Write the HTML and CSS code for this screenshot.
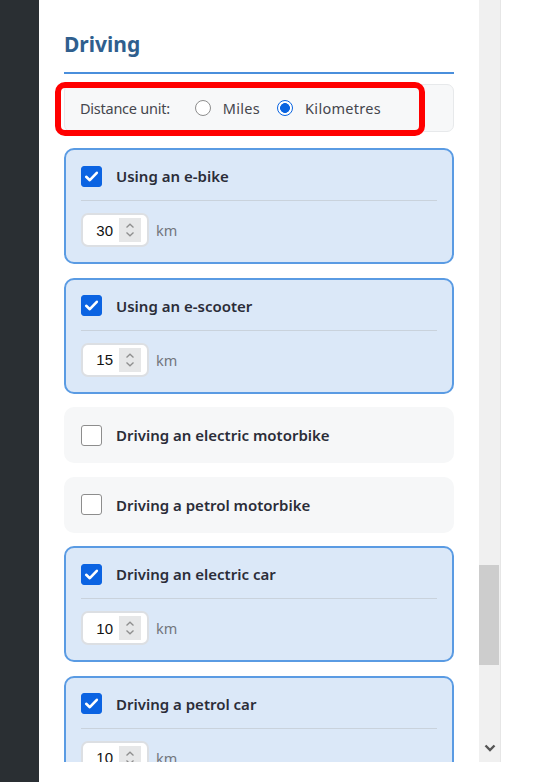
FILE: index.html
```html
<!DOCTYPE html>
<html lang="en">
<head>
<meta charset="utf-8">
<title>Driving</title>
<link rel="stylesheet" href="styles.css">
</head>
<body>
<div class="app">
  <aside class="rail"></aside>
  <div class="main">
    <div class="viewport">
      <div class="panel">
        <h2 class="title">Driving</h2>
        <div class="unit-box">
          <span class="unit-label">Distance unit:</span>
          <label class="radio"><span class="radio-dot"></span>Miles</label>
          <label class="radio"><span class="radio-dot on"></span>Kilometres</label>
          <div class="annot"></div>
        </div>
        <div class="cards">
          <div class="card checked">
            <div class="card-head"><span class="cb on"><svg viewBox="0 0 21 21" width="21" height="21"><path d="M5.2 10.8 L8.8 14.2 L15.8 6.8" fill="none" stroke="#fff" stroke-width="2.6" stroke-linecap="round" stroke-linejoin="round"/></svg></span><span class="card-label">Using an e-bike</span></div>
            <div class="card-body"><div class="num"><span class="num-val">30</span><span class="spin"><svg viewBox="0 0 20 22" width="20" height="22"><path d="M6.5 8.5 L10 5.2 L13.5 8.5 M6.5 13.5 L10 16.8 L13.5 13.5" fill="none" stroke="#8f8f8f" stroke-width="1.3"/></svg></span></div><span class="unit">km</span></div>
          </div>
          <div class="card checked">
            <div class="card-head"><span class="cb on"><svg viewBox="0 0 21 21" width="21" height="21"><path d="M5.2 10.8 L8.8 14.2 L15.8 6.8" fill="none" stroke="#fff" stroke-width="2.6" stroke-linecap="round" stroke-linejoin="round"/></svg></span><span class="card-label">Using an e-scooter</span></div>
            <div class="card-body"><div class="num"><span class="num-val">15</span><span class="spin"><svg viewBox="0 0 20 22" width="20" height="22"><path d="M6.5 8.5 L10 5.2 L13.5 8.5 M6.5 13.5 L10 16.8 L13.5 13.5" fill="none" stroke="#8f8f8f" stroke-width="1.3"/></svg></span></div><span class="unit">km</span></div>
          </div>
          <div class="card">
            <div class="card-head"><span class="cb"></span><span class="card-label">Driving an electric motorbike</span></div>
          </div>
          <div class="card">
            <div class="card-head"><span class="cb"></span><span class="card-label">Driving a petrol motorbike</span></div>
          </div>
          <div class="card checked">
            <div class="card-head"><span class="cb on"><svg viewBox="0 0 21 21" width="21" height="21"><path d="M5.2 10.8 L8.8 14.2 L15.8 6.8" fill="none" stroke="#fff" stroke-width="2.6" stroke-linecap="round" stroke-linejoin="round"/></svg></span><span class="card-label">Driving an electric car</span></div>
            <div class="card-body"><div class="num"><span class="num-val">10</span><span class="spin"><svg viewBox="0 0 20 22" width="20" height="22"><path d="M6.5 8.5 L10 5.2 L13.5 8.5 M6.5 13.5 L10 16.8 L13.5 13.5" fill="none" stroke="#8f8f8f" stroke-width="1.3"/></svg></span></div><span class="unit">km</span></div>
          </div>
          <div class="card checked">
            <div class="card-head"><span class="cb on"><svg viewBox="0 0 21 21" width="21" height="21"><path d="M5.2 10.8 L8.8 14.2 L15.8 6.8" fill="none" stroke="#fff" stroke-width="2.6" stroke-linecap="round" stroke-linejoin="round"/></svg></span><span class="card-label">Driving a petrol car</span></div>
            <div class="card-body"><div class="num"><span class="num-val">10</span><span class="spin"><svg viewBox="0 0 20 22" width="20" height="22"><path d="M6.5 8.5 L10 5.2 L13.5 8.5 M6.5 13.5 L10 16.8 L13.5 13.5" fill="none" stroke="#8f8f8f" stroke-width="1.3"/></svg></span></div><span class="unit">km</span></div>
          </div>
        </div>
      </div>
      <div class="scrollbar">
        <div class="track">
          <div class="thumb"></div>
        </div>
        <div class="arrow"><svg viewBox="0 0 20 14" width="20" height="14"><path d="M5.5 4.5 L10 9 L14.5 4.5" fill="none" stroke="#555" stroke-width="2.4"/></svg></div>
      </div>
    </div>
  </div>
</div>
</body>
</html>
```

FILE: styles.css
```css
* { box-sizing: border-box; }
html, body { margin: 0; padding: 0; background: #fff; }
body { font-family: "Noto Sans", "Open Sans", sans-serif; color: #2b2d38; }

.app { display: flex; width: 549px; height: 782px; overflow: hidden; }
.rail { width: 39px; flex: none; background: #2a2f33; }
.main { flex: 1; display: flex; flex-direction: column; }
.viewport { height: 762px; display: flex; overflow: hidden; }

.panel { width: 440px; flex: none; padding: 30px 25px 0 25px; background: #fff; }

.title {
  margin: 0 0 10px 0;
  padding: 0 0 13px 0;
  font-size: 21px;
  line-height: 29px;
  font-weight: 700;
  color: #2f5f8e;
  border-bottom: 2px solid #4a8fdc;
}

.unit-box {
  position: relative;
  height: 48px;
  display: flex;
  align-items: center;
  padding: 0 15px;
  background: #f7f8f9;
  border: 1px solid #e7e9eb;
  border-radius: 7px;
  font-size: 14.5px;
  color: #45464d;
}
.unit-label { margin-right: 25px; letter-spacing: -0.25px; }
.radio { display: flex; align-items: center; margin-right: 17px; letter-spacing: 0.3px; }
.radio-dot {
  width: 16px; height: 16px; border-radius: 50%;
  border: 1px solid #8d8d8d; background: #fff; margin-right: 12px;
}
.radio-dot.on {
  border: 1.5px solid #0a64e0;
  background: radial-gradient(circle, #0a64e0 0 4.6px, #fff 5.2px);
}
.annot {
  position: absolute;
  left: -10px; top: -3px;
  width: 370px; height: 54px;
  border: 6px solid #ff0000;
  border-radius: 10px;
  pointer-events: none;
}

.cards { display: flex; flex-direction: column; gap: 13.5px; margin-top: 16px; }
.card {
  border: 2px solid transparent;
  border-radius: 10px;
  background: #f6f7f8;
  padding: 15px;
}
.card.checked { background: #dbe8f8; border-color: #5a9be3; }
.card-head { display: flex; align-items: center; height: 22px; gap: 14px; }
.card-label { font-size: 15px; font-weight: 600; color: #2b2d38; }
.cb {
  width: 21px; height: 21px; flex: none;
  border: 1px solid #8d8d8d; border-radius: 3px; background: #fff;
  display: flex;
}
.cb.on { background: #0b63e2; border-color: #0b63e2; }
.cb.on svg { margin: -1px; }

.card-body {
  margin-top: 13px;
  padding-top: 12px;
  border-top: 1px solid #c9d2dc;
  display: flex;
  align-items: center;
  gap: 7px;
}
.num {
  width: 68px; height: 34px;
  background: #fff;
  border: 2px solid #dcdfe3;
  border-radius: 7px;
  display: flex; align-items: center; justify-content: flex-end;
  padding-right: 6px;
  gap: 6px;
  font-family: "Liberation Sans", Arial, sans-serif;
  font-size: 15px; color: #111;
}
.spin { width: 22px; height: 24px; background: #e6e7e8; display: flex; align-items: center; justify-content: center; }
.unit { font-size: 14.5px; color: #72767d; }

.scrollbar { width: 22px; flex: none; display: flex; flex-direction: column; background: #f0f0f0; border-right: 1px solid #e6e6e6; }
.track { flex: 1; padding-top: 565px; }
.thumb { width: 20px; height: 100px; background: #cdcdcd; }
.arrow { height: 22px; display: flex; align-items: flex-start; justify-content: center; padding-top: 1px; }
```
